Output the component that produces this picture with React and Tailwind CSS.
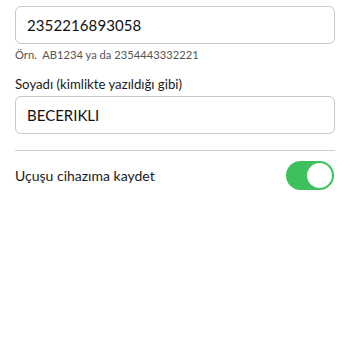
export default function App() {
  return (
    <div className="w-[350px] h-[350px] bg-white overflow-hidden" style={{ fontFamily: "Lato, 'Noto Sans', sans-serif" }}>
      <div className="px-[15px] flex flex-col">
        <div className="-mt-[15px] text-[13px] leading-[16px] text-[#222] whitespace-nowrap">Bilet numarası veya rezervasyon kodu</div>
        <div className="mt-[5px] h-[38px] rounded-[6px] border border-[#c8c8c8] px-[11px] flex items-center text-[15px] tracking-[0.1px] text-[#111]">
          2352216893058
        </div>
        <div className="mt-[3px] text-[11.2px] leading-[16px] text-[#555] whitespace-pre">Örn.  AB1234 ya da 2354443332221</div>
        <div className="mt-[12px] text-[13.2px] leading-[18px] text-[#1a1a1a]">Soyadı (kimlikte yazıldığı gibi)</div>
        <div className="mt-[3px] h-[38px] rounded-[6px] border border-[#c8c8c8] px-[11px] flex items-center text-[15px] text-[#111]">
          BECERIKLI
        </div>
        <div className="mt-[16px] h-px bg-[#cccccc]" />
        <div className="mt-[10px] h-[29px] flex items-center justify-between">
          <span className="text-[14px] text-[#1a1a1a]">Uçuşu cihazıma kaydet</span>
          <div className="relative w-[48px] h-[29px] rounded-full bg-[#3ec15c] mr-[1px]">
            <div className="absolute right-[2px] top-[2px] w-[25px] h-[25px] rounded-full bg-white" />
          </div>
        </div>
      </div>
    </div>
  );
}
